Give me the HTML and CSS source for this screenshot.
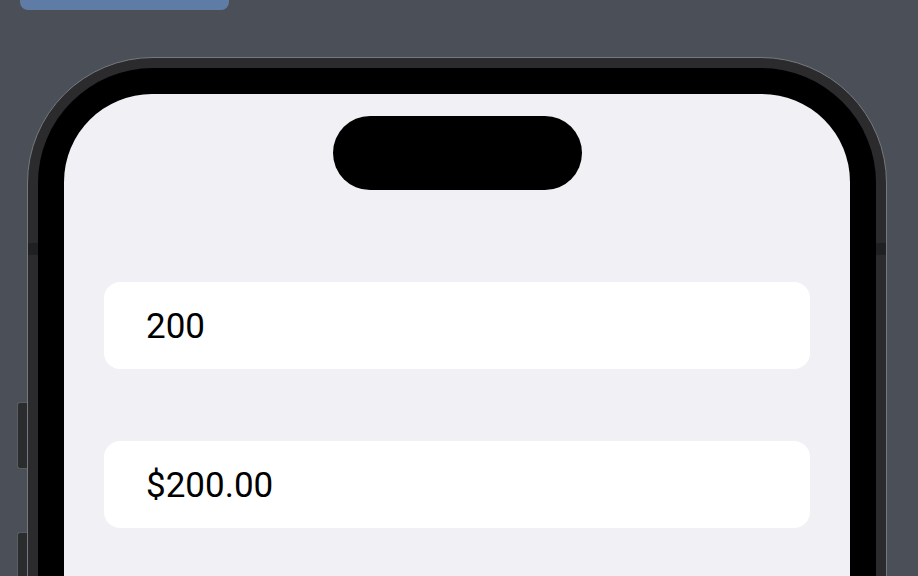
FILE: index.html
```html
<!DOCTYPE html>
<html lang="en">
<head>
<meta charset="utf-8">
<title>Currency field</title>
<link rel="stylesheet" href="styles.css">
</head>
<body>
<div class="page">
  <div class="top-button"></div>
  <div class="phone">
    <span class="side-btn side-btn-1"></span>
    <span class="side-btn side-btn-2"></span>
    <span class="antenna antenna-left"></span>
    <span class="antenna antenna-right"></span>
    <div class="rim">
      <div class="bezel">
        <div class="screen">
          <div class="island"></div>
          <div class="fields">
            <div class="field">200</div>
            <div class="field">$200.00</div>
          </div>
        </div>
      </div>
    </div>
  </div>
</div>
</body>
</html>
```

FILE: styles.css
```css
* { box-sizing: border-box; }
html, body { margin: 0; padding: 0; }
body { background: #4b5058; }
.page {
  width: 918px;
  height: 576px;
  overflow: hidden;
  background: #4b5058;
}
.top-button {
  margin-left: 20px;
  width: 209px;
  height: 10px;
  background: #5e7ca6;
  border-radius: 0 0 8px 8px;
}
.phone {
  position: relative;
  margin: 47px 0 0 27px;
  width: 860px;
  height: 720px;
  border: 1px solid #75787d;
  border-radius: 126px;
  background: #2b2b2d;
}
.rim {
  height: 100%;
  padding: 10px;
}
.bezel {
  height: 100%;
  background: #000;
  border-radius: 115px;
  padding: 26px;
}
.screen {
  height: 100%;
  background: #f0f0f5;
  border-radius: 88px;
  padding: 22px 40px 0;
  display: flex;
  flex-direction: column;
}
.island {
  align-self: center;
  width: 249px;
  height: 74px;
  background: #000;
  border-radius: 37px;
}
.fields {
  margin-top: 92px;
  display: flex;
  flex-direction: column;
  gap: 72px;
}
.field {
  height: 87px;
  background: #fff;
  border-radius: 16px;
  padding-left: 42px;
  display: flex;
  align-items: center;
  font-family: Roboto, "Liberation Sans", sans-serif;
  font-size: 35px;
  color: #000;
  padding-top: 2px;
}
.side-btn {
  position: absolute;
  left: -11px;
  width: 10px;
  background: #2b2c2e;
  border: 1px solid #5a5d62;
  border-right: none;
  border-radius: 3px 0 0 3px;
}
.side-btn-1 { top: 344px; height: 67px; }
.side-btn-2 { top: 474px; height: 120px; }
.antenna {
  position: absolute;
  top: 185px;
  width: 10px;
  height: 12px;
  background: #1e2021;
}
.antenna-left { left: 0; }
.antenna-right { right: 0; }
```
